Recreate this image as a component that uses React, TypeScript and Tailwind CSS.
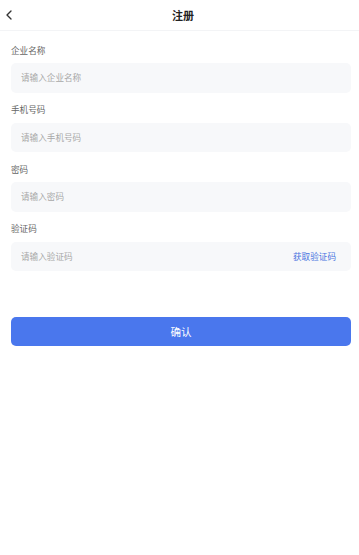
import { ChevronLeft } from "lucide-react";

const fields = [
  { label: "企业名称", placeholder: "请输入企业名称" },
  { label: "手机号码", placeholder: "请输入手机号码" },
  { label: "密码", placeholder: "请输入密码" },
  { label: "验证码", placeholder: "请输入验证码", code: true },
];

export default function App() {
  return (
    <div
      className="min-h-[555px] w-full bg-white"
      style={{ fontFamily: '"Noto Sans CJK SC", "Noto Sans", sans-serif' }}
    >
      {/* Header */}
      <div className="relative flex h-[31px] items-center justify-center border-b border-[#f3f4f6]">
        <ChevronLeft className="absolute left-[1px] h-[16px] w-[16px] text-[#333]" strokeWidth={2} />
        <h1 className="pl-[7px] text-[11px] font-bold text-[#222]">注册</h1>
      </div>

      {/* Form */}
      <div className="pl-[11px] pr-[8px] pt-[2px]">
        {fields.map((f) => (
          <div key={f.label} className="pt-[10px]">
            <div className="flex h-[14px] items-center text-[8.6px] text-[#666]">{f.label}</div>
            <div className="mt-[6px] flex h-[29.5px] items-center justify-between rounded-[5px] bg-[#f7f8fa] pl-[10px] pr-[15px]">
              <span className="text-[8.6px] text-[#a8a8a8]">{f.placeholder}</span>
              {f.code ? (
                <span className="text-[8.6px] text-[#4a74e0]">获取验证码</span>
              ) : null}
            </div>
          </div>
        ))}

        <button className="mt-[46px] flex h-[29px] w-full items-center justify-center rounded-[5px] bg-[#4a77ed] text-[10.5px] text-white">
          确认
        </button>
      </div>
    </div>
  );
}
